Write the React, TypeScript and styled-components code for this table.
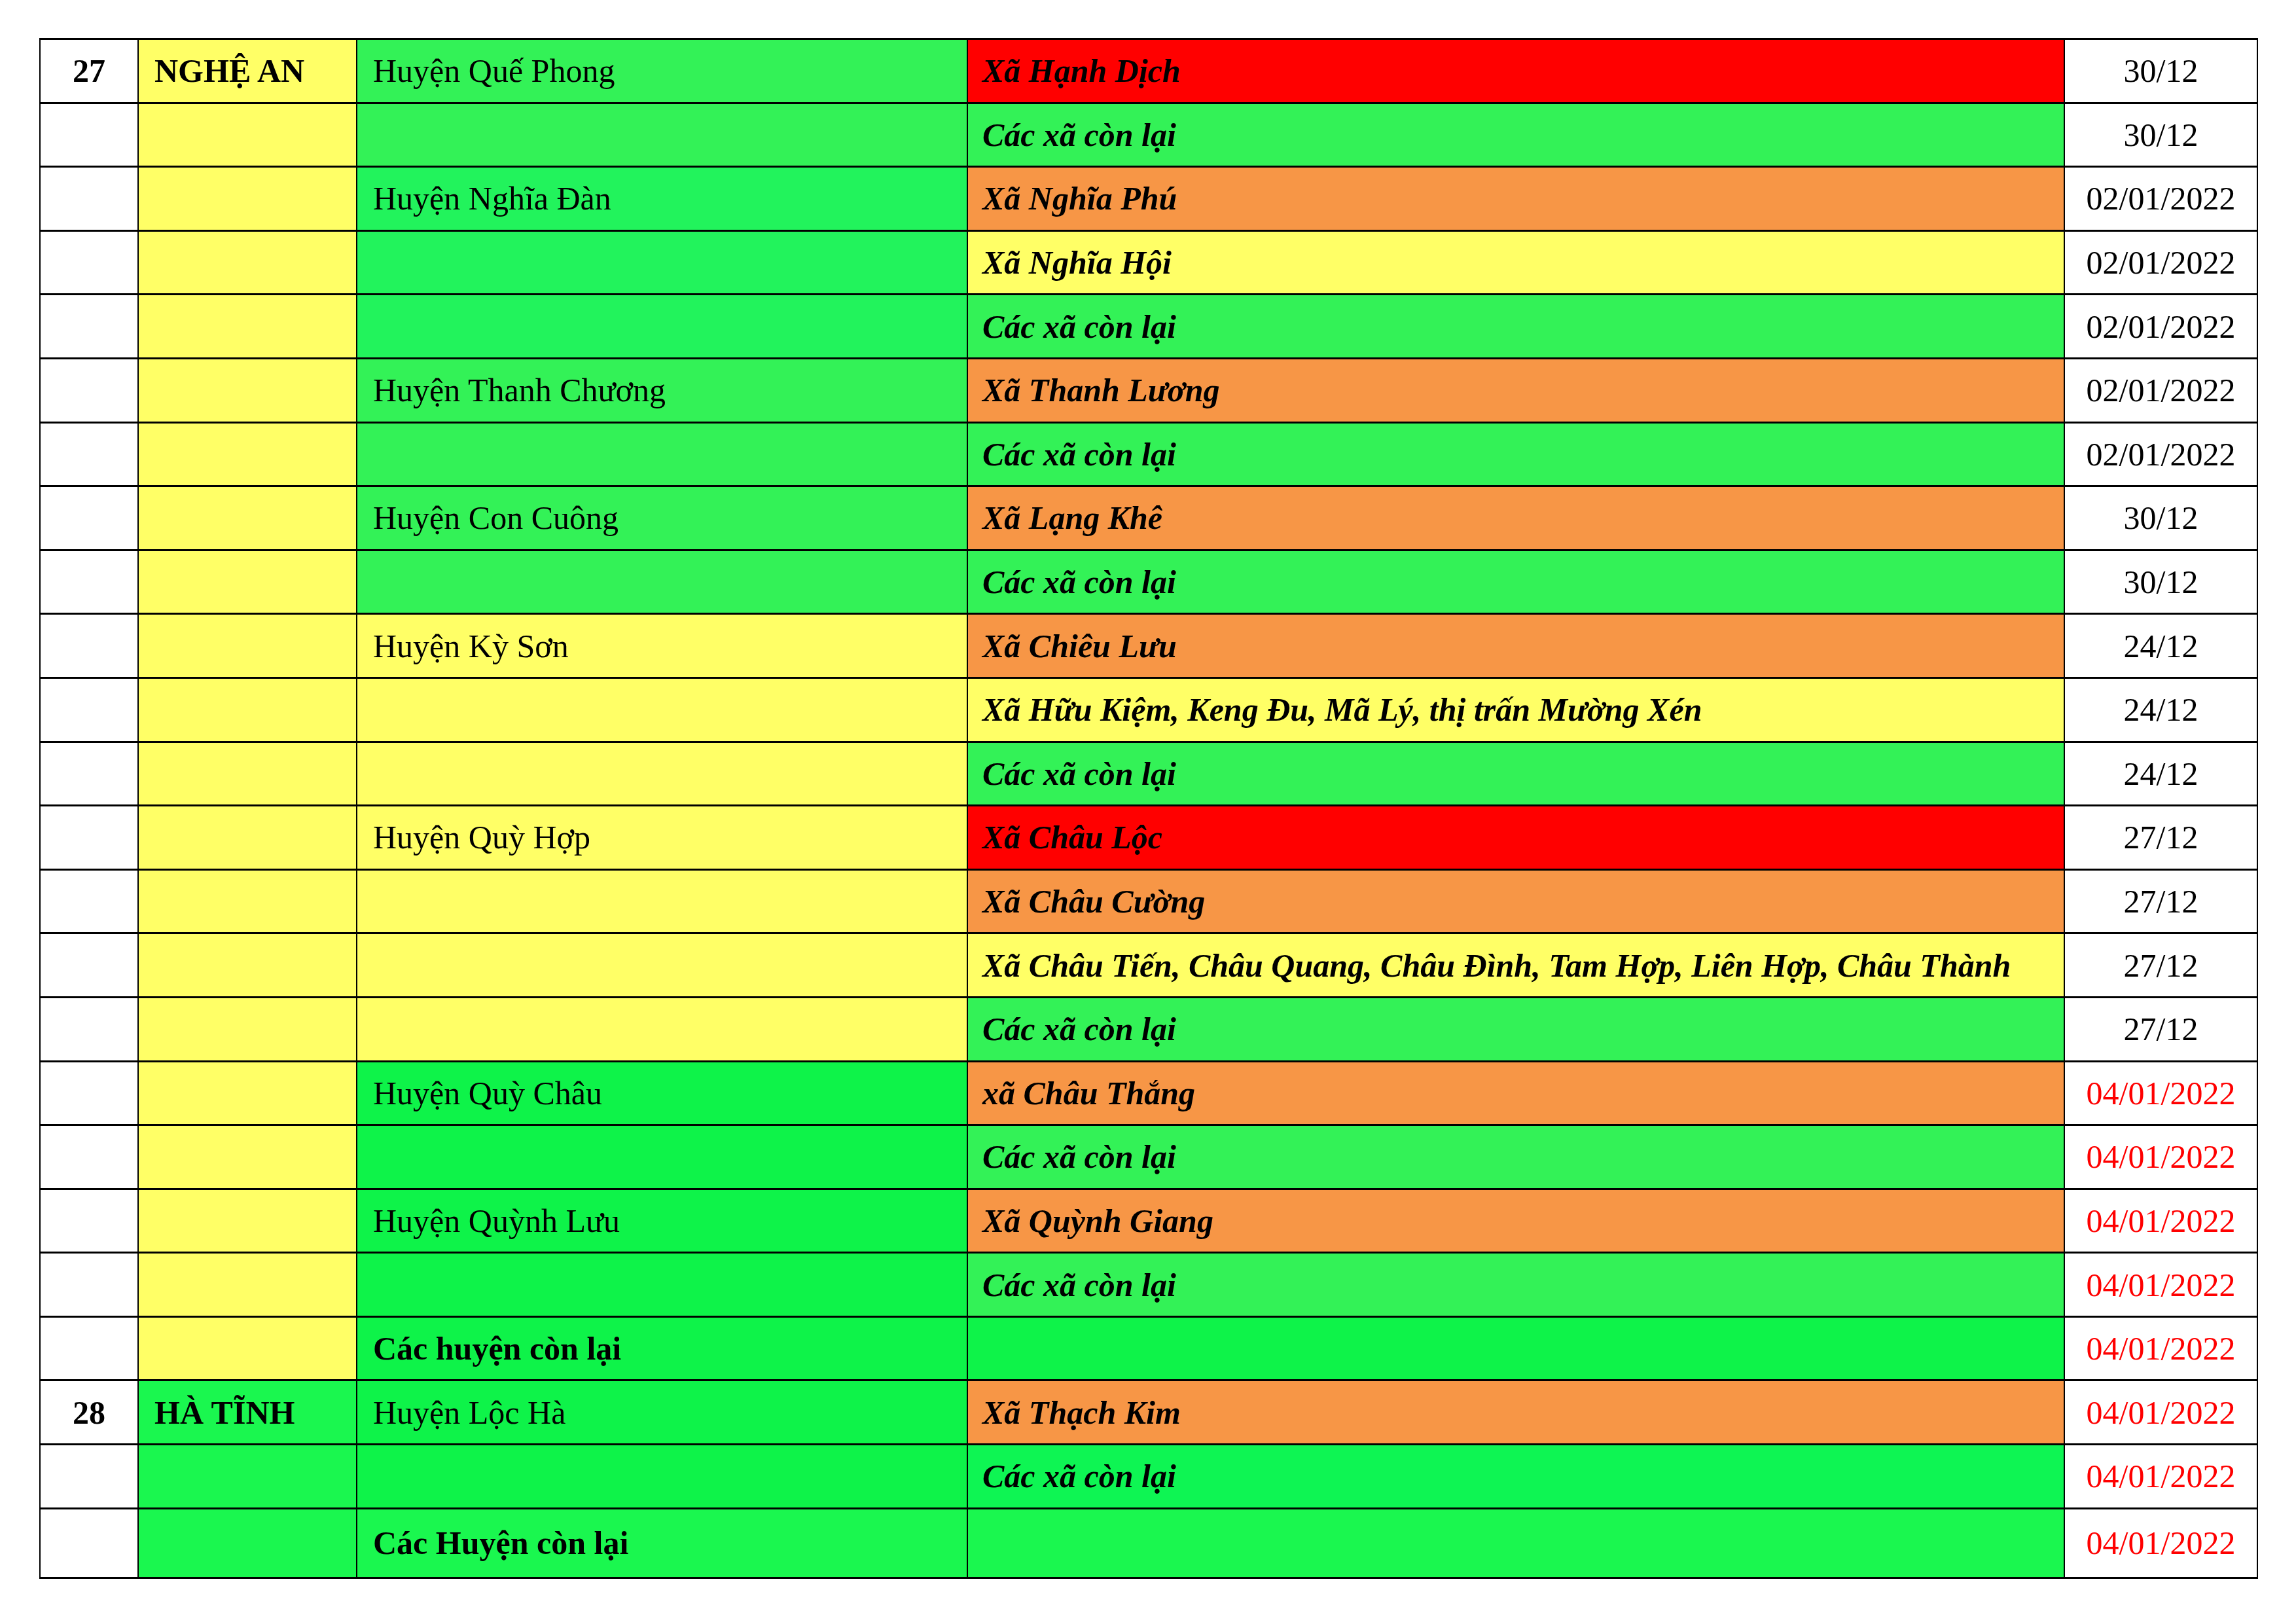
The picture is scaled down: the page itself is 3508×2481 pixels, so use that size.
import React from 'react';
import styled, { createGlobalStyle } from 'styled-components';

const colors = {
  white: '#FFFFFF',
  yellow: '#FFFF66',
  orange: '#F79646',
  red: '#FF0000',
  green: '#33F257',
  greenDeep: '#22F35C',
  greenBright: '#0EF349',
  greenSea: '#0EF553',
  greenTinh: '#1AF74F',
};

type Bg = keyof typeof colors;

interface IRow {
  no?: string;
  province?: string;
  provinceBg: Bg;
  district?: string;
  districtBold?: boolean;
  districtBg: Bg;
  commune?: string;
  communeBg: Bg;
  date: string;
  late?: boolean;
}

const columnWidths = [150, 334, 933, 1676, 295];

const rows: IRow[] = [
  { no: '27', province: 'NGHỆ AN', provinceBg: 'yellow', district: 'Huyện Quế Phong', districtBg: 'green', commune: 'Xã Hạnh Dịch', communeBg: 'red', date: '30/12' },
  { provinceBg: 'yellow', districtBg: 'green', commune: 'Các xã còn lại', communeBg: 'green', date: '30/12' },
  { provinceBg: 'yellow', district: 'Huyện Nghĩa Đàn', districtBg: 'greenDeep', commune: 'Xã Nghĩa Phú', communeBg: 'orange', date: '02/01/2022' },
  { provinceBg: 'yellow', districtBg: 'greenDeep', commune: 'Xã Nghĩa Hội', communeBg: 'yellow', date: '02/01/2022' },
  { provinceBg: 'yellow', districtBg: 'greenDeep', commune: 'Các xã còn lại', communeBg: 'green', date: '02/01/2022' },
  { provinceBg: 'yellow', district: 'Huyện Thanh Chương', districtBg: 'green', commune: 'Xã Thanh Lương', communeBg: 'orange', date: '02/01/2022' },
  { provinceBg: 'yellow', districtBg: 'green', commune: 'Các xã còn lại', communeBg: 'green', date: '02/01/2022' },
  { provinceBg: 'yellow', district: 'Huyện Con Cuông', districtBg: 'green', commune: 'Xã Lạng Khê', communeBg: 'orange', date: '30/12' },
  { provinceBg: 'yellow', districtBg: 'green', commune: 'Các xã còn lại', communeBg: 'green', date: '30/12' },
  { provinceBg: 'yellow', district: 'Huyện Kỳ Sơn', districtBg: 'yellow', commune: 'Xã Chiêu Lưu', communeBg: 'orange', date: '24/12' },
  { provinceBg: 'yellow', districtBg: 'yellow', commune: 'Xã Hữu Kiệm, Keng Đu, Mã Lý, thị trấn Mường Xén', communeBg: 'yellow', date: '24/12' },
  { provinceBg: 'yellow', districtBg: 'yellow', commune: 'Các xã còn lại', communeBg: 'green', date: '24/12' },
  { provinceBg: 'yellow', district: 'Huyện Quỳ Hợp', districtBg: 'yellow', commune: 'Xã Châu Lộc', communeBg: 'red', date: '27/12' },
  { provinceBg: 'yellow', districtBg: 'yellow', commune: 'Xã Châu Cường', communeBg: 'orange', date: '27/12' },
  { provinceBg: 'yellow', districtBg: 'yellow', commune: 'Xã Châu Tiến, Châu Quang, Châu Đình, Tam Hợp, Liên Hợp, Châu Thành', communeBg: 'yellow', date: '27/12' },
  { provinceBg: 'yellow', districtBg: 'yellow', commune: 'Các xã còn lại', communeBg: 'green', date: '27/12' },
  { provinceBg: 'yellow', district: 'Huyện Quỳ Châu', districtBg: 'greenBright', commune: 'xã Châu Thắng', communeBg: 'orange', date: '04/01/2022', late: true },
  { provinceBg: 'yellow', districtBg: 'greenBright', commune: 'Các xã còn lại', communeBg: 'green', date: '04/01/2022', late: true },
  { provinceBg: 'yellow', district: 'Huyện Quỳnh Lưu', districtBg: 'greenBright', commune: 'Xã Quỳnh Giang', communeBg: 'orange', date: '04/01/2022', late: true },
  { provinceBg: 'yellow', districtBg: 'greenBright', commune: 'Các xã còn lại', communeBg: 'green', date: '04/01/2022', late: true },
  { provinceBg: 'yellow', district: 'Các huyện còn lại', districtBold: true, districtBg: 'greenBright', communeBg: 'greenBright', date: '04/01/2022', late: true },
  { no: '28', province: 'HÀ TĨNH', provinceBg: 'greenTinh', district: 'Huyện Lộc Hà', districtBg: 'greenBright', commune: 'Xã Thạch Kim', communeBg: 'orange', date: '04/01/2022', late: true },
  { provinceBg: 'greenTinh', districtBg: 'greenBright', commune: 'Các xã còn lại', communeBg: 'greenSea', date: '04/01/2022', late: true },
  { provinceBg: 'greenTinh', district: 'Các Huyện còn lại', districtBold: true, districtBg: 'greenTinh', communeBg: 'greenTinh', date: '04/01/2022', late: true },
];

const GlobalStyle = createGlobalStyle`
  html, body {
    margin: 0;
    padding: 0;
    background: #ffffff;
  }
  body {
    width: 3508px;
    height: 2481px;
    overflow: hidden;
    font-family: "Liberation Serif", "Times New Roman", serif;
  }
`;

const Sheet = styled.div`
  padding: 58px 0 0 60px;
`;

const Table = styled.table`
  border-collapse: collapse;
  table-layout: fixed;
  width: 3388px;
  font-size: 50px;
  color: #000000;
`;

const Col = styled.col<{ $w: number }>`
  width: ${props => props.$w}px;
`;

const Row = styled.tr<{ $tall?: boolean }>`
  height: ${props => (props.$tall ? '106px' : '97.6px')};
`;

const Cell = styled.td<{ $bg?: Bg }>`
  padding: 0 0 0 24px;
  border-top: 3px solid #000000;
  border-bottom: 3px solid #000000;
  border-left: 2px solid #000000;
  border-right: 2px solid #000000;
  background: ${props => colors[props.$bg || 'white']};
  vertical-align: middle;
  white-space: nowrap;
  line-height: normal;
`;

const NoCell = styled(Cell)`
  padding: 0;
  text-align: center;
  font-weight: bold;
`;

const ProvinceCell = styled(Cell)`
  font-weight: bold;
`;

const DistrictCell = styled(Cell)<{ $bold?: boolean }>`
  font-weight: ${props => (props.$bold ? 'bold' : 'normal')};
`;

const CommuneCell = styled(Cell)`
  padding-left: 22px;
  font-weight: bold;
  font-style: italic;
`;

const DateCell = styled(Cell)<{ $late?: boolean }>`
  padding: 0;
  text-align: center;
  color: ${props => (props.$late ? colors.red : '#000000')};
`;

const App = () => (
  <>
    <GlobalStyle />
    <Sheet>
      <Table>
        <colgroup>
          {columnWidths.map((w, i) => (
            <Col key={i} $w={w} />
          ))}
        </colgroup>
        <tbody>
          {rows.map((row, i) => (
            <Row key={i} $tall={i === rows.length - 1}>
              <NoCell>{row.no}</NoCell>
              <ProvinceCell $bg={row.provinceBg}>{row.province}</ProvinceCell>
              <DistrictCell $bg={row.districtBg} $bold={row.districtBold}>
                {row.district}
              </DistrictCell>
              <CommuneCell $bg={row.communeBg}>{row.commune}</CommuneCell>
              <DateCell $late={row.late}>{row.date}</DateCell>
            </Row>
          ))}
        </tbody>
      </Table>
    </Sheet>
  </>
);

export default App;
